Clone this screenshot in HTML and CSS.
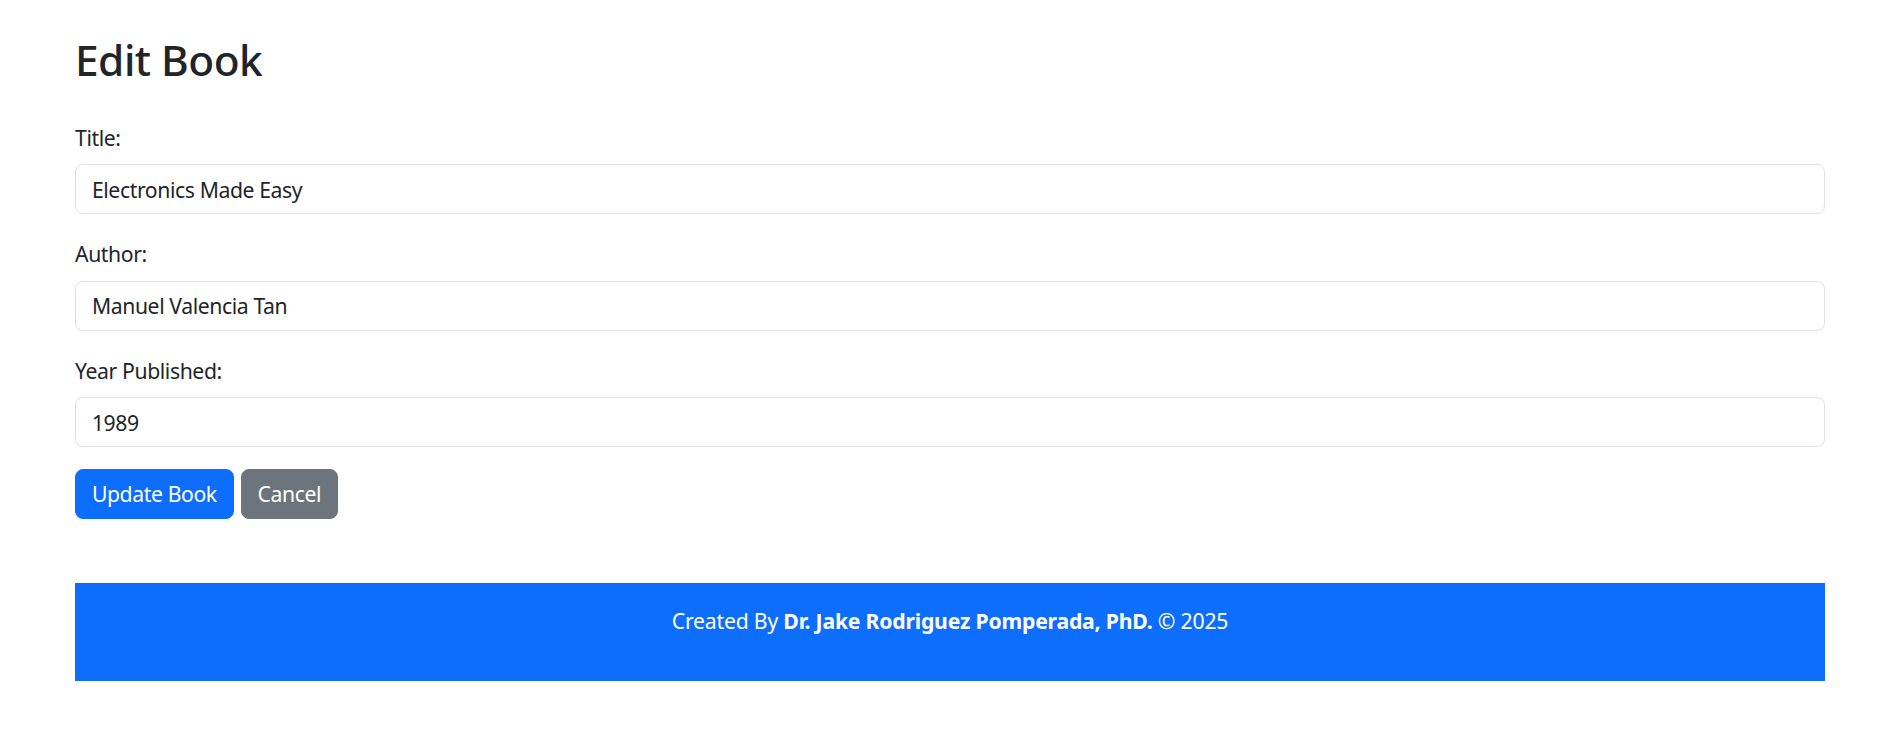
FILE: index.html
```html
<!DOCTYPE html>
<html lang="en">
<head>
<meta charset="utf-8">
<title>Edit Book</title>
<link rel="stylesheet" href="styles.css">
</head>
<body>
<div class="container">
  <h2 class="page-title">Edit Book</h2>
  <form class="book-form">
    <div class="field">
      <label class="field-label" for="title">Title:</label>
      <input class="field-input" id="title" type="text" value="Electronics Made Easy">
    </div>
    <div class="field">
      <label class="field-label" for="author">Author:</label>
      <input class="field-input" id="author" type="text" value="Manuel Valencia Tan">
    </div>
    <div class="field">
      <label class="field-label" for="year">Year Published:</label>
      <input class="field-input" id="year" type="text" value="1989">
    </div>
    <div class="actions">
      <button type="button" class="btn btn-primary">Update Book</button>
      <button type="button" class="btn btn-secondary">Cancel</button>
    </div>
  </form>
  <footer class="site-footer">
    <p class="footer-text">Created By <strong>Dr. Jake Rodriguez Pomperada, PhD.</strong> &copy; 2025</p>
  </footer>
</div>
</body>
</html>
```
FILE: styles.css
```css
* { box-sizing: border-box; }

html, body {
  margin: 0;
  padding: 0;
  background: #fff;
}

body {
  font-family: "Noto Sans", "Open Sans", sans-serif;
  font-size: 21.2px;
  line-height: 1.5;
  color: #212529;
  letter-spacing: -0.4px;
}

.container {
  width: 1750px;
  margin: 0 56px 0 75px;
  padding-top: 35px;
}

.page-title {
  margin: 0 0 36px;
  font-size: 42.4px;
  font-weight: 500;
  line-height: 1.2;
  letter-spacing: -0.5px;
}

.book-form {
  display: flex;
  flex-direction: column;
}

.field {
  display: flex;
  flex-direction: column;
  margin-bottom: 24.2px;
}

.field-label {
  margin-bottom: 10.6px;
}

.field-input {
  display: block;
  width: 100%;
  height: 50px;
  padding: 7.95px 15.9px;
  font: inherit;
  letter-spacing: inherit;
  color: #212529;
  background: #fff;
  border: 1px solid #dee2e6;
  border-radius: 8px;
  outline: none;
}

.actions {
  display: flex;
  gap: 7px;
  margin-top: -3px;
}

.btn {
  height: 50px;
  padding: 7.95px 15.9px;
  font: inherit;
  letter-spacing: inherit;
  color: #fff;
  border: 1px solid transparent;
  border-radius: 8px;
  cursor: pointer;
}

.btn-primary {
  background: #0d6efd;
  border-color: #0d6efd;
}

.btn-secondary {
  background: #6c757d;
  border-color: #6c757d;
}

.site-footer {
  margin-top: 64.5px;
  padding: 22px 0 44px;
  background: #0d6efd;
  color: #fff;
  text-align: center;
  letter-spacing: -0.2px;
}

.footer-text {
  margin: 0;
}

.footer-text strong {
  font-weight: 700;
}
```
